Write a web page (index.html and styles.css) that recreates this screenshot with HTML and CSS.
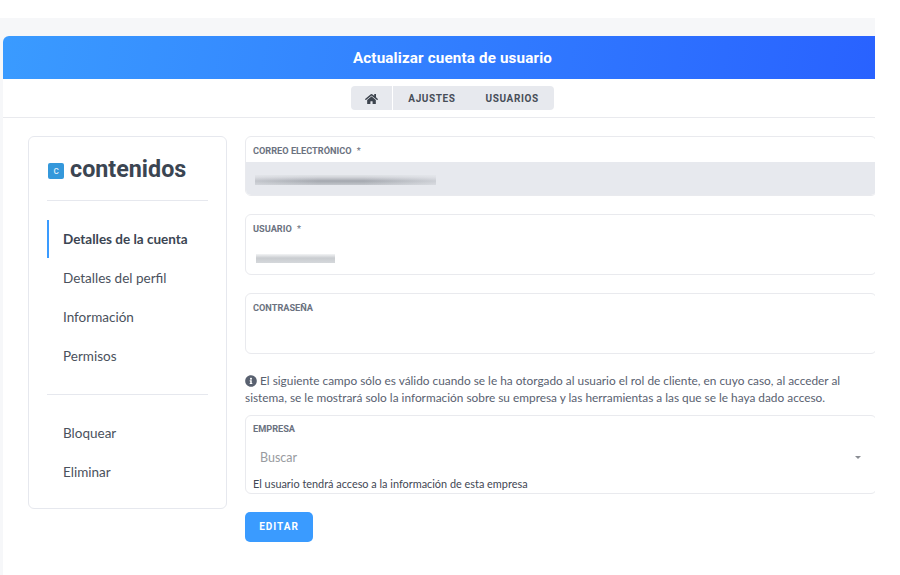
FILE: index.html
```html
<!DOCTYPE html>
<html lang="es">
<head>
<meta charset="utf-8">
<title>Actualizar cuenta de usuario</title>
<link rel="stylesheet" href="styles.css">
</head>
<body>
<div class="app">
  <main class="card">
    <header class="banner"><h1>Actualizar cuenta de usuario</h1></header>
    <div class="tabbar">
      <nav class="tabs">
        <a class="tab tab-home"><svg class="home-icon" viewBox="0 0 576 512"><path d="M280.37 148.26L96 300.11V464a16 16 0 0 0 16 16l112.06-.29a16 16 0 0 0 15.92-16V368a16 16 0 0 1 16-16h64a16 16 0 0 1 16 16v95.64a16 16 0 0 0 16 16.05L464 480a16 16 0 0 0 16-16V300L295.67 148.26a12.19 12.19 0 0 0-15.3 0zM571.6 251.47L488 182.56V44.05a12 12 0 0 0-12-12h-56a12 12 0 0 0-12 12v72.61L318.47 43a48 48 0 0 0-61 0L4.34 251.47a12 12 0 0 0-1.6 16.9l25.5 31A12 12 0 0 0 45.15 301l235.22-193.74a12.19 12.19 0 0 1 15.3 0L530.9 301a12 12 0 0 0 16.9-1.6l25.5-31a12 12 0 0 0-1.7-16.93z"/></svg></a>
        <a class="tab tab-text">AJUSTES</a>
        <a class="tab tab-text">USUARIOS</a>
      </nav>
    </div>
    <div class="content">
      <aside class="sidebar">
        <div class="brand"><span class="brand-mark">c</span><span class="brand-name">contenidos</span></div>
        <ul class="menu menu-main">
          <li class="menu-item active">Detalles de la cuenta</li>
          <li class="menu-item">Detalles del perfil</li>
          <li class="menu-item">Información</li>
          <li class="menu-item">Permisos</li>
        </ul>
        <ul class="menu menu-extra">
          <li class="menu-item">Bloquear</li>
          <li class="menu-item">Eliminar</li>
        </ul>
      </aside>
      <form class="form">
        <div class="field field-email">
          <label class="field-label">CORREO ELECTRÓNICO <span class="req">*</span></label>
          <div class="field-readonly"><span class="blur blur-email"></span></div>
        </div>
        <div class="field field-input">
          <label class="field-label">USUARIO <span class="req">*</span></label>
          <div class="field-value"><span class="blur blur-user"></span></div>
        </div>
        <div class="field field-input">
          <label class="field-label">CONTRASEÑA</label>
          <div class="field-value"></div>
        </div>
        <p class="note"><svg class="info-icon" viewBox="0 0 512 512"><path d="M256 8C119.043 8 8 119.083 8 256c0 136.997 111.043 248 248 248s248-111.003 248-248C504 119.083 392.957 8 256 8zm0 110c23.196 0 42 18.804 42 42s-18.804 42-42 42-42-18.804-42-42 18.804-42 42-42zm56 254c0 6.627-5.373 12-12 12h-88c-6.627 0-12-5.373-12-12v-24c0-6.627 5.373-12 12-12h12v-64h-12c-6.627 0-12-5.373-12-12v-24c0-6.627 5.373-12 12-12h64c6.627 0 12 5.373 12 12v100h12c6.627 0 12 5.373 12 12v24z"/></svg> El siguiente campo sólo es válido cuando se le ha otorgado al usuario el rol de cliente, en cuyo caso, al acceder al sistema, se le mostrará solo la información sobre su empresa y las herramientas a las que se le haya dado acceso.</p>
        <div class="field field-select">
          <label class="field-label field-label-tight">EMPRESA</label>
          <div class="select-row"><span class="placeholder">Buscar</span><span class="caret"></span></div>
          <div class="hint">El usuario tendrá acceso a la información de esta empresa</div>
        </div>
        <button type="button" class="btn">EDITAR</button>
      </form>
    </div>
  </main>
</div>
</body>
</html>
```

FILE: styles.css
```css
* { box-sizing: border-box; }
html, body { margin: 0; padding: 0; background: #fff; }
body { height: 575px; overflow: hidden; font-family: Lato, "Open Sans", sans-serif; color: #3b4552; }
.app { width: 875px; height: 557px; margin-top: 18px; padding: 18px 0 0 3px; background: #f6f7f9; overflow: hidden; }
.card { width: 899px; height: 539px; background: #fff; border-radius: 6px 0 0 0; overflow: hidden; }
.banner { height: 43px; display: flex; align-items: center; justify-content: center; padding-top: 2px; background: linear-gradient(100deg, #3a9bff 0%, #2962ff 97%); }
.banner h1 { margin: 0; font: 700 15.2px/1 Roboto, sans-serif; letter-spacing: .15px; color: #fff; }
.tabbar { height: 39px; display: flex; justify-content: center; padding-top: 7px; border-bottom: 1px solid #e9eaee; }
.tabs { display: flex; height: 24px; background: #e7e9ee; border-radius: 4px; overflow: hidden; }
.tab { display: flex; align-items: center; padding-top: 1px; font: 700 10px/1 Roboto, sans-serif; letter-spacing: .6px; color: #474e58; }
.tab-home { width: 42px; justify-content: center; border-right: 1px solid #fff; }
.home-icon { width: 13px; height: 12px; fill: #3d444e; }
.tab-text { padding: 1px 15px 0; }
.content { display: flex; padding: 18px 0 0 25px; gap: 18px; }
.sidebar { flex: 0 0 199px; height: 373px; padding: 0 18px; border: 1px solid #e6e8ee; border-radius: 6px; }
.brand { display: flex; align-items: center; gap: 6px; height: 64px; margin-bottom: 19px; padding: 2px 0 0 1px; border-bottom: 1px solid #e6e8ee; }
.brand-mark { flex: 0 0 16px; height: 16px; display: flex; align-items: center; justify-content: center; margin-top: 2px; background: #3498db; border-radius: 2px; font: 400 10px/1 Roboto, sans-serif; color: #e8f3fb; }
.brand-name { font: 700 23.3px/1 Roboto, sans-serif; color: #3b4552; }
.menu { list-style: none; margin: 0; padding: 0; }
.menu-main { padding-bottom: 19px; border-bottom: 1px solid #e6e8ee; margin-bottom: 18px; }
.menu-item { height: 39px; display: flex; align-items: center; padding-left: 16px; font-size: 13.5px; color: #4a515c; }
.menu-item.active { height: 38px; border-left: 2px solid #3a9bff; padding-left: 14px; font-weight: 700; color: #3b4552; }
.form { flex: 0 0 632px; min-width: 0; }
.field { border: 1px solid #e9eaee; border-radius: 6px; overflow: hidden; }
.field-label { display: block; padding: 8px 0 0 7px; height: 25px; font: 700 9.2px/12px Roboto, sans-serif; color: #6b7280; }
.field-label-tight { padding-top: 7px; height: 24px; }
.req { margin-left: 3px; font-weight: 400; }
.field-email { height: 60px; margin-bottom: 18px; }
.field-readonly { height: 34px; background: #e7e9ee; padding: 13px 0 0 9px; }
.blur { display: block; }
.blur-email { width: 181px; height: 10px; background: linear-gradient(90deg, rgba(231,233,238,.45), rgba(231,233,238,0) 35%, rgba(231,233,238,0) 60%, rgba(231,233,238,.6) 100%), linear-gradient(180deg, #dfe2e6 0%, #d4d6db 20%, #a4a8af 60%, #c3c6cc 100%); }
.field-input { height: 61px; margin-bottom: 18px; }
.field-value { height: 34px; padding: 14px 0 0 10px; }
.blur-user { width: 79px; height: 9px; background: linear-gradient(180deg, #f3f4f5 0%, #c9ccd0 45%, #d5d8db 100%); }
.note { margin: 0 0 9px; font-size: 11.85px; line-height: 17px; color: #596170; width: 625px; }
.info-icon { width: 12px; height: 12px; fill: #596170; vertical-align: -2px; }
.field-select { height: 79px; margin-bottom: 18px; }
.select-row { height: 35px; display: flex; align-items: center; justify-content: space-between; padding: 0 15px 0 14px; }
.placeholder { font-size: 12.5px; color: #999ba0; }
.caret { width: 0; height: 0; border: 3px solid transparent; border-top: 3px solid #8a8d93; border-bottom: 0; }
.hint { padding: 2px 0 0 7px; font-size: 10.9px; line-height: 14px; color: #3f4754; }
.btn { display: block; width: 68px; height: 30px; padding: 0; border: 0; border-radius: 5px; background: #3a9bff; font: 700 10px/1 Roboto, sans-serif; letter-spacing: 1px; color: #fff; }
```
